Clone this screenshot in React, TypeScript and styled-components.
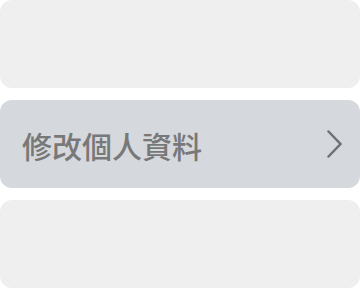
import React from "react";
import styled, { createGlobalStyle } from "styled-components";

const Global = createGlobalStyle`
  html, body { margin: 0; padding: 0; background: #ffffff; }
  body { font-family: "Noto Sans CJK TC", "Noto Sans", sans-serif; }
`;

const List = styled.div`
  display: flex;
  flex-direction: column;
  gap: 12px;
  width: 360px;
`;

const Card = styled.div<{ $active?: boolean }>`
  height: 88px;
  border-radius: 12px;
  background: ${(p) => (p.$active ? "#d5d8dd" : "#efefef")};
  display: flex;
  align-items: center;
  justify-content: space-between;
  padding: 0 17px 0 22px;
  box-sizing: border-box;
`;

const Label = styled.span`
  font-family: "Noto Sans CJK TC", "Noto Sans CJK SC", sans-serif;
  font-size: 30px;
  font-weight: 500;
  line-height: 1;
  color: #787878;
  margin-top: 2px;
`;

const Chevron = styled.svg`
  width: 17px;
  height: 28px;
  display: block;
`;

export default function App() {
  return (
    <>
      <Global />
      <List>
        <Card />
        <Card $active>
          <Label>修改個人資料</Label>
          <Chevron viewBox="0 0 17 28">
            <path
              d="M2.5 1.5 L14.5 14 L2.5 26.5"
              fill="none"
              stroke="#707070"
              strokeWidth="2.5"
              strokeLinecap="round"
              strokeLinejoin="miter"
            />
          </Chevron>
        </Card>
        <Card />
      </List>
    </>
  );
}
